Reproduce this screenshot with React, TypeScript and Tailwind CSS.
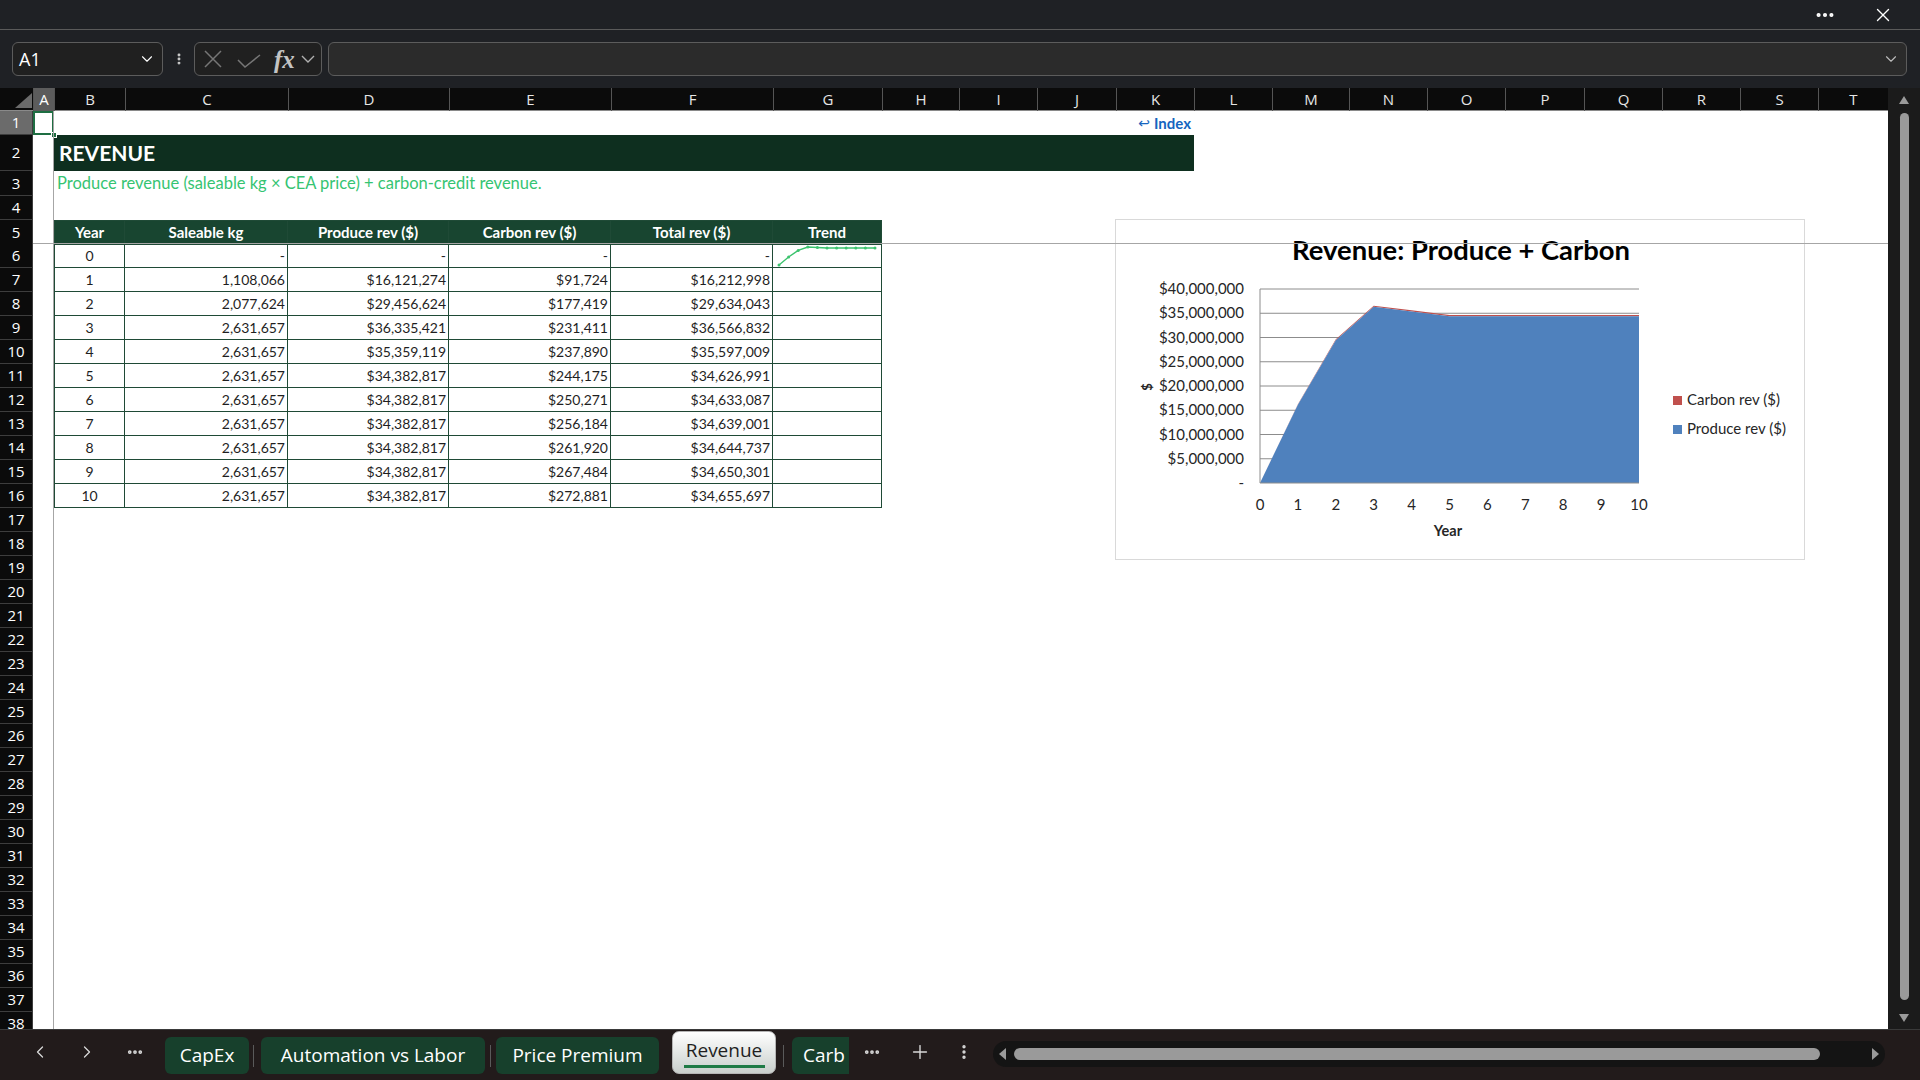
import React from 'react';
import { ChevronLeft, ChevronRight, ChevronDown, Plus, X, MoreHorizontal, MoreVertical } from 'lucide-react';

const COLS =
  'grid grid-cols-[33px_21px_71px_163px_161px_162px_162px_109px_77px_78px_79px_78px_78px_77px_78px_78px_79px_78px_78px_78px_70px]';

const LETTERS = ['A', 'B', 'C', 'D', 'E', 'F', 'G', 'H', 'I', 'J', 'K', 'L', 'M', 'N', 'O', 'P', 'Q', 'R', 'S', 'T'];

const DATA = [
  { year: 0, kg: '-', prod: '-', carb: '-', total: '-' },
  { year: 1, kg: '1,108,066', prod: '$16,121,274', carb: '$91,724', total: '$16,212,998' },
  { year: 2, kg: '2,077,624', prod: '$29,456,624', carb: '$177,419', total: '$29,634,043' },
  { year: 3, kg: '2,631,657', prod: '$36,335,421', carb: '$231,411', total: '$36,566,832' },
  { year: 4, kg: '2,631,657', prod: '$35,359,119', carb: '$237,890', total: '$35,597,009' },
  { year: 5, kg: '2,631,657', prod: '$34,382,817', carb: '$244,175', total: '$34,626,991' },
  { year: 6, kg: '2,631,657', prod: '$34,382,817', carb: '$250,271', total: '$34,633,087' },
  { year: 7, kg: '2,631,657', prod: '$34,382,817', carb: '$256,184', total: '$34,639,001' },
  { year: 8, kg: '2,631,657', prod: '$34,382,817', carb: '$261,920', total: '$34,644,737' },
  { year: 9, kg: '2,631,657', prod: '$34,382,817', carb: '$267,484', total: '$34,650,301' },
  { year: 10, kg: '2,631,657', prod: '$34,382,817', carb: '$272,881', total: '$34,655,697' },
];

const PRODUCE = [0, 16.121274, 29.456624, 36.335421, 35.359119, 34.382817, 34.382817, 34.382817, 34.382817, 34.382817, 34.382817];
const TOTAL = [0, 16.212998, 29.634043, 36.566832, 35.597009, 34.626991, 34.633087, 34.639001, 34.644737, 34.650301, 34.655697];

const rowHeight = (r: number) => (r === 2 ? 'h-[36px]' : r === 3 ? 'h-[25px]' : 'h-[24px]');

function Sparkline() {
  const pts = TOTAL.map((v, i) => [6 + i * 9.6, 21 - (18 * v) / 36.567]);
  return (
    <svg width="109" height="24" className="block">
      <polyline points={pts.map((p) => p.join(',')).join(' ')} fill="none" stroke="#3cc36e" strokeWidth="1.4" />
      {pts.map((p, i) => (
        <circle key={i} cx={p[0]} cy={p[1]} r="1.5" fill="#3cc36e" />
      ))}
    </svg>
  );
}

function RevenueChart() {
  const x0 = 144;
  const x1 = 523;
  const yt = 69;
  const yb = 263;
  const xs = (i: number) => x0 + (i * (x1 - x0)) / 10;
  const ys = (v: number) => yb - ((yb - yt) * v) / 40;
  const prod = PRODUCE.map((v, i) => `${xs(i)},${ys(v)}`);
  const tot = TOTAL.map((v, i) => `${xs(i)},${ys(v)}`);
  const yLabels = ['$40,000,000', '$35,000,000', '$30,000,000', '$25,000,000', '$20,000,000', '$15,000,000', '$10,000,000', '$5,000,000', '-'];

  return (
    <div className="absolute left-[1115px] top-[108px] w-[690px] h-[341px] bg-white border border-[#d9d9d9]">
      <svg width="690" height="341" className="block font-['Lato',sans-serif]">
        <text x="345" y="40" textAnchor="middle" fontSize="27.4" fontWeight="700" fill="#000">
          Revenue: Produce + Carbon
        </text>
        {yLabels.map((l, i) => {
          const y = yt + (i * (yb - yt)) / 8;
          return (
            <g key={l}>
              {i < 8 && <line x1={x0} x2={x1} y1={y} y2={y} stroke="#8c8c8c" strokeWidth="1" />}
              <text x="128" y={y + 5} textAnchor="end" fontSize="15" fill="#262626">
                {l}
              </text>
            </g>
          );
        })}
        <polygon points={[...tot, ...prod.slice().reverse()].join(' ')} fill="#c0504d" />
        <polygon points={[...prod, `${x1},${yb}`, `${x0},${yb}`].join(' ')} fill="#4f81bd" />
        <line x1={x0} x2={x0} y1={yt} y2={yb} stroke="#8c8c8c" strokeWidth="1" />
        <line x1={x0} x2={x1} y1={yb} y2={yb} stroke="#8c8c8c" strokeWidth="1" />
        {Array.from({ length: 11 }).map((_, i) => (
          <text key={i} x={xs(i)} y="290" textAnchor="middle" fontSize="15" fill="#262626">
            {i}
          </text>
        ))}
        <text x="332" y="316" textAnchor="middle" fontSize="14.5" fontWeight="700" fill="#262626">
          Year
        </text>
        <text x="0" y="0" transform="translate(36,167) rotate(-90)" textAnchor="middle" fontSize="13" fontWeight="700" fill="#262626">
          $
        </text>
        <rect x="557" y="176" width="9" height="9" fill="#c0504d" />
        <text x="571" y="185" fontSize="15" fill="#262626">
          Carbon rev ($)
        </text>
        <rect x="557" y="205" width="9" height="9" fill="#4f81bd" />
        <text x="571" y="214" fontSize="15" fill="#262626">
          Produce rev ($)
        </text>
      </svg>
    </div>
  );
}

function RowHeader({ r }: { r: number }) {
  return (
    <div
      className={`flex items-center justify-center border-b border-r border-[#3d3d3d] font-['Open_Sans',sans-serif] text-[15px] text-white ${
        r === 1 ? 'bg-[#6b6b6b]' : 'bg-[#0b0b0b]'
      }`}
    >
      {r}
    </div>
  );
}

function SheetRow({ r }: { r: number }) {
  const cells: React.ReactNode[] = [<RowHeader key="h" r={r} />, <div key="a" />];

  if (r === 1) {
    cells.push(<div key="b" className="col-span-9" />);
    cells.push(
      <div key="k" className="flex items-center justify-end pr-[3px] text-[15px] font-bold text-[#1565c0]">
        <span className="font-['DejaVu_Sans'] text-[14px] font-normal mr-[4px]">↩</span>Index
      </div>
    );
  } else if (r === 2) {
    cells.push(
      <div key="b" className="col-span-10 flex items-center bg-[#0e2f1f] pl-[5px] text-[21px] font-bold text-white">
        REVENUE
      </div>
    );
  } else if (r === 3) {
    cells.push(
      <div key="b" className="col-span-9 flex items-center whitespace-nowrap pl-[3px] text-[16.5px] text-[#35c472]">
        Produce revenue (saleable kg × CEA price) + carbon-credit revenue.
      </div>
    );
  } else if (r === 5) {
    const heads = ['Year', 'Saleable kg', 'Produce rev ($)', 'Carbon rev ($)', 'Total rev ($)', 'Trend'];
    heads.forEach((h, i) => {
      cells.push(
        <div
          key={h}
          className={`flex items-center justify-center bg-[#184530] border-t border-r border-b border-[#1f4a36] text-[15px] font-bold text-white ${
            i === 0 ? 'border-l' : ''
          }`}
        >
          {h}
        </div>
      );
    });
  } else if (r >= 6 && r <= 16) {
    const d = DATA[r - 6];
    const base = 'flex items-center border-r border-b border-[#1f4a36] text-[14px] text-[#1f1f1f]';
    cells.push(
      <div key="b" className={`${base} border-l justify-center`}>
        {d.year}
      </div>
    );
    [d.kg, d.prod, d.carb, d.total].forEach((v, i) => {
      cells.push(
        <div key={i} className={`${base} justify-end pr-[2px]`}>
          {v}
        </div>
      );
    });
    cells.push(
      <div key="g" className={`${base} overflow-hidden`}>
        {r === 6 && <Sparkline />}
      </div>
    );
  }

  return <div className={`${COLS} ${rowHeight(r)}`}>{cells}</div>;
}

function ColumnHeaders() {
  return (
    <div className={`${COLS} h-[23px] bg-[#0b0b0b] border-b border-[#8a8a8a]`}>
      <div className="relative">
        <svg width="33" height="23" className="block">
          <polygon points="15,20 32,20 32,5" fill="#6b6b6b" />
        </svg>
      </div>
      {LETTERS.map((l) => (
        <div
          key={l}
          className={`flex items-center justify-center border-l border-[#555] text-[15px] text-[#e6e6e6] ${
            l === 'A' ? 'bg-[#5c5c5c] text-white' : ''
          }`}
        >
          {l}
        </div>
      ))}
    </div>
  );
}

function VerticalScrollbar() {
  return (
    <div className="w-[32px] bg-[#1b1b1b] flex flex-col items-center pt-[6px]">
      <svg width="12" height="10" className="mt-[1px]">
        <polygon points="6,1 11,9 1,9" fill="#9a9a9a" />
      </svg>
      <div className="mt-[8px] w-[9px] h-[887px] rounded-full bg-[#9a9a9a]" />
      <svg width="12" height="10" className="mt-[13px]">
        <polygon points="1,1 11,1 6,9" fill="#9a9a9a" />
      </svg>
    </div>
  );
}

function Tab({ label, w }: { label: string; w: string }) {
  return (
    <div className={`${w} h-[37px] mt-[7px] rounded-[6px] bg-[#17402c] flex items-center justify-center text-[19px] text-white`}>
      {label}
    </div>
  );
}

function TabBar() {
  return (
    <div className="h-[51px] bg-[#221b1b] border-t border-[#3a3a3a] flex items-start font-['Open_Sans',sans-serif] text-[#d9d9d9]">
      <div className="ml-[20px] w-[40px] h-[44px] flex items-center justify-center">
        <ChevronLeft size={20} strokeWidth={1.5} />
      </div>
      <div className="ml-[7px] w-[40px] h-[44px] flex items-center justify-center">
        <ChevronRight size={20} strokeWidth={1.5} />
      </div>
      <div className="ml-[8px] w-[40px] h-[44px] flex items-center justify-center">
        <MoreHorizontal size={18} strokeWidth={3} />
      </div>
      <div className="ml-[10px]">
        <Tab label="CapEx" w="w-[84px]" />
      </div>
      <div className="ml-[4px] mt-[15px] w-px h-[22px] bg-[#5a5a5a]" />
      <div className="ml-[7px]">
        <Tab label="Automation vs Labor" w="w-[224px]" />
      </div>
      <div className="ml-[5px] mt-[15px] w-px h-[22px] bg-[#5a5a5a]" />
      <div className="ml-[5px]">
        <Tab label="Price Premium" w="w-[163px]" />
      </div>
      <div className="ml-[13px] mt-[1px] w-[104px] h-[43px] rounded-[7px] border border-[#b5b5b5] bg-gradient-to-b from-white to-[#c9cfcc] flex flex-col items-center justify-center text-[19px] text-[#1f1f1f]">
        <span className="leading-[24px]">Revenue</span>
        <div className="mt-[3px] w-[81px] h-[3px] bg-[#1e7a45]" />
      </div>
      <div className="ml-[7px] mt-[15px] w-px h-[22px] bg-[#5a5a5a]" />
      <div className="ml-[8px] w-[57px] h-[37px] mt-[7px] rounded-l-[6px] bg-[#17402c] flex items-center pl-[11px] text-[19px] text-white whitespace-nowrap">
        Carb
      </div>
      <div className="ml-[8px] w-[30px] h-[44px] flex items-center justify-center">
        <MoreHorizontal size={18} strokeWidth={3} />
      </div>
      <div className="ml-[18px] w-[30px] h-[44px] flex items-center justify-center">
        <Plus size={22} strokeWidth={1.5} />
      </div>
      <div className="ml-[19px] w-[20px] h-[44px] flex items-center justify-center">
        <MoreVertical size={18} strokeWidth={2.5} />
      </div>
      <div className="ml-[19px] mt-[11px] w-[892px] h-[26px] rounded-full bg-[#141414] flex items-center px-[4px]">
        <svg width="10" height="14">
          <polygon points="9,1 9,13 2,7" fill="#9a9a9a" />
        </svg>
        <div className="ml-[7px] w-[806px] h-[12px] rounded-full bg-[#9a9a9a]" />
        <div className="flex-1" />
        <svg width="10" height="14">
          <polygon points="1,1 1,13 8,7" fill="#9a9a9a" />
        </svg>
      </div>
    </div>
  );
}

export default function App() {
  const rows = Array.from({ length: 38 }, (_, i) => i + 1);
  return (
    <div className="w-[1920px] h-[1080px] overflow-hidden flex flex-col bg-[#1f2125] font-['Open_Sans',sans-serif]">
      {/* title bar */}
      <div className="h-[30px] flex items-center justify-end border-b border-[#5a5a5a] text-white">
        <MoreHorizontal size={22} strokeWidth={2.5} className="mr-[36px]" />
        <X size={22} strokeWidth={1.5} className="mr-[26px]" />
      </div>

      {/* formula bar */}
      <div className="h-[58px] flex items-start pt-[12px]">
        <div className="ml-[12px] w-[151px] h-[34px] rounded-[6px] border border-[#5c5c5c] bg-[#202020] flex items-center justify-between pl-[6px] pr-[6px] text-white">
          <span className="text-[18px]">A1</span>
          <ChevronDown size={18} strokeWidth={1.5} />
        </div>
        <div className="ml-[9px] w-[14px] h-[34px] flex items-center justify-center text-[#cfcfcf]">
          <MoreVertical size={18} strokeWidth={3} />
        </div>
        <div className="ml-[8px] w-[128px] h-[34px] rounded-[6px] border border-[#5c5c5c] bg-[#202020] flex items-center">
          <svg width="18" height="18" className="ml-[9px]">
            <path d="M1 1 L17 17 M17 1 L1 17" stroke="#767676" strokeWidth="1.5" fill="none" />
          </svg>
          <svg width="24" height="14" className="ml-[15px] mt-[3px]">
            <polyline points="1,6 8,13 23,1" stroke="#767676" strokeWidth="1.5" fill="none" />
          </svg>
          <span className="ml-[13px] font-['Liberation_Serif',serif] italic font-bold text-[25px] leading-none text-[#c4c4c4]">fx</span>
          <svg width="14" height="9" className="ml-[6px]">
            <polyline points="1,1 7,7 13,1" stroke="#b0b0b0" strokeWidth="1.4" fill="none" />
          </svg>
        </div>
        <div className="ml-[6px] flex-1 mr-[13px] h-[34px] rounded-[6px] border border-[#5c5c5c] bg-[#2b2b2b] flex items-center justify-end pr-[6px] text-[#bdbdbd]">
          <ChevronDown size={18} strokeWidth={1.5} />
        </div>
      </div>

      {/* sheet */}
      <div className="flex h-[941px]">
        <div className="flex-1 flex flex-col bg-white font-['Lato',sans-serif]">
          <div className="font-['Open_Sans',sans-serif]">
            <ColumnHeaders />
          </div>
          <div className="relative flex-1 overflow-hidden">
            {rows.map((r) => (
              <SheetRow key={r} r={r} />
            ))}
            {/* selected cell A1 */}
            <div className="absolute left-[33px] top-0 w-[21px] h-[24px] border-2 border-[#1e6e42]" />
            <div className="absolute left-[51px] top-[21px] w-[6px] h-[6px] bg-[#1e6e42] border border-white" />
            <RevenueChart />
            {/* freeze panes */}
            <div className="absolute left-[53px] top-0 bottom-0 w-px bg-[#a6a6a6]" />
            <div className="absolute left-[33px] right-0 top-[132px] h-px bg-[#a6a6a6]" />
          </div>
        </div>
        <VerticalScrollbar />
      </div>

      <TabBar />
    </div>
  );
}
